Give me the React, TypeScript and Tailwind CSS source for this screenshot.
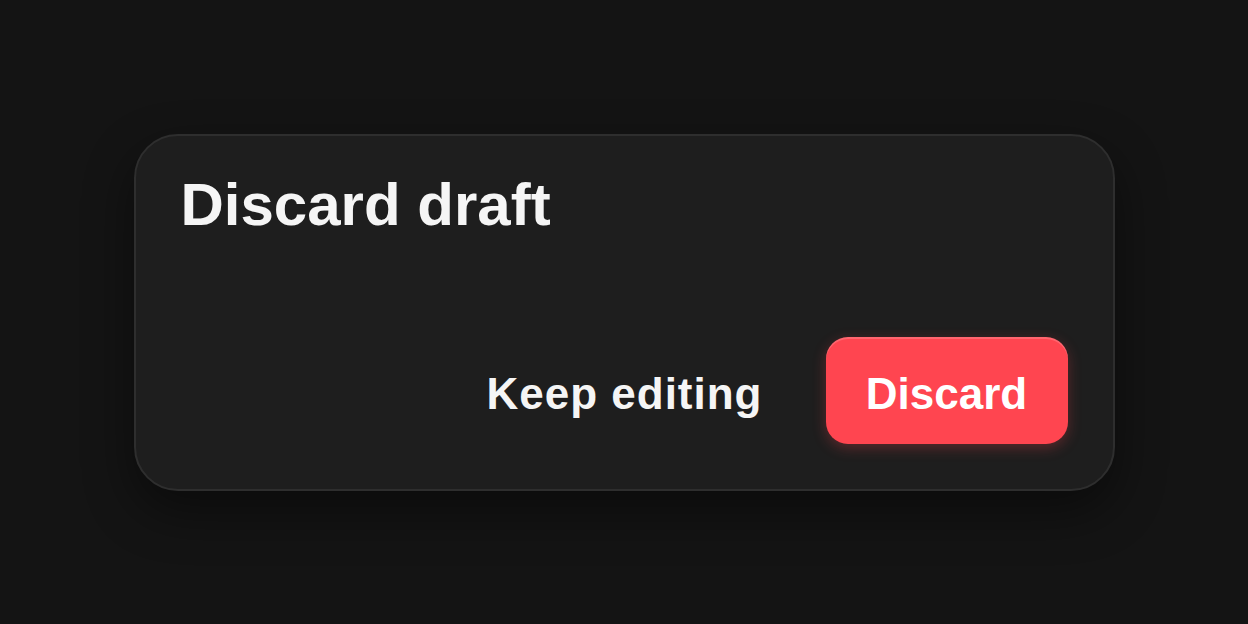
import React from "react";

const App: React.FC = () => {
  return (
    <div
      className="w-full h-[624px] bg-[#141414] flex items-center justify-center"
      style={{ fontFamily: "'Liberation Sans', Arial, sans-serif" }}
    >
      <div className="w-[981px] h-[357px] rounded-[44px] border-2 border-[#2e2e2e] bg-[#1e1e1e] shadow-[0_20px_50px_rgba(0,0,0,0.45)] px-[45px] pt-[39px] pb-[45px] flex flex-col justify-between">
        <h2 className="text-[60px] leading-none font-bold text-[#f5f5f5]">
          Discard draft
        </h2>
        <div className="flex items-center justify-end gap-[63px]">
          <button className="h-[107px] pt-[7px] text-[44px] font-bold text-[#f5f5f5] tracking-[1px]">
            Keep editing
          </button>
          <button className="h-[107px] w-[242px] pt-[7px] flex items-center justify-center rounded-[22px] bg-[#ff4550] text-white text-[44px] font-bold shadow-[inset_0_2px_0_rgba(255,255,255,0.18),0_4px_14px_rgba(255,69,80,0.28)]">
            Discard
          </button>
        </div>
      </div>
    </div>
  );
};

export default App;
